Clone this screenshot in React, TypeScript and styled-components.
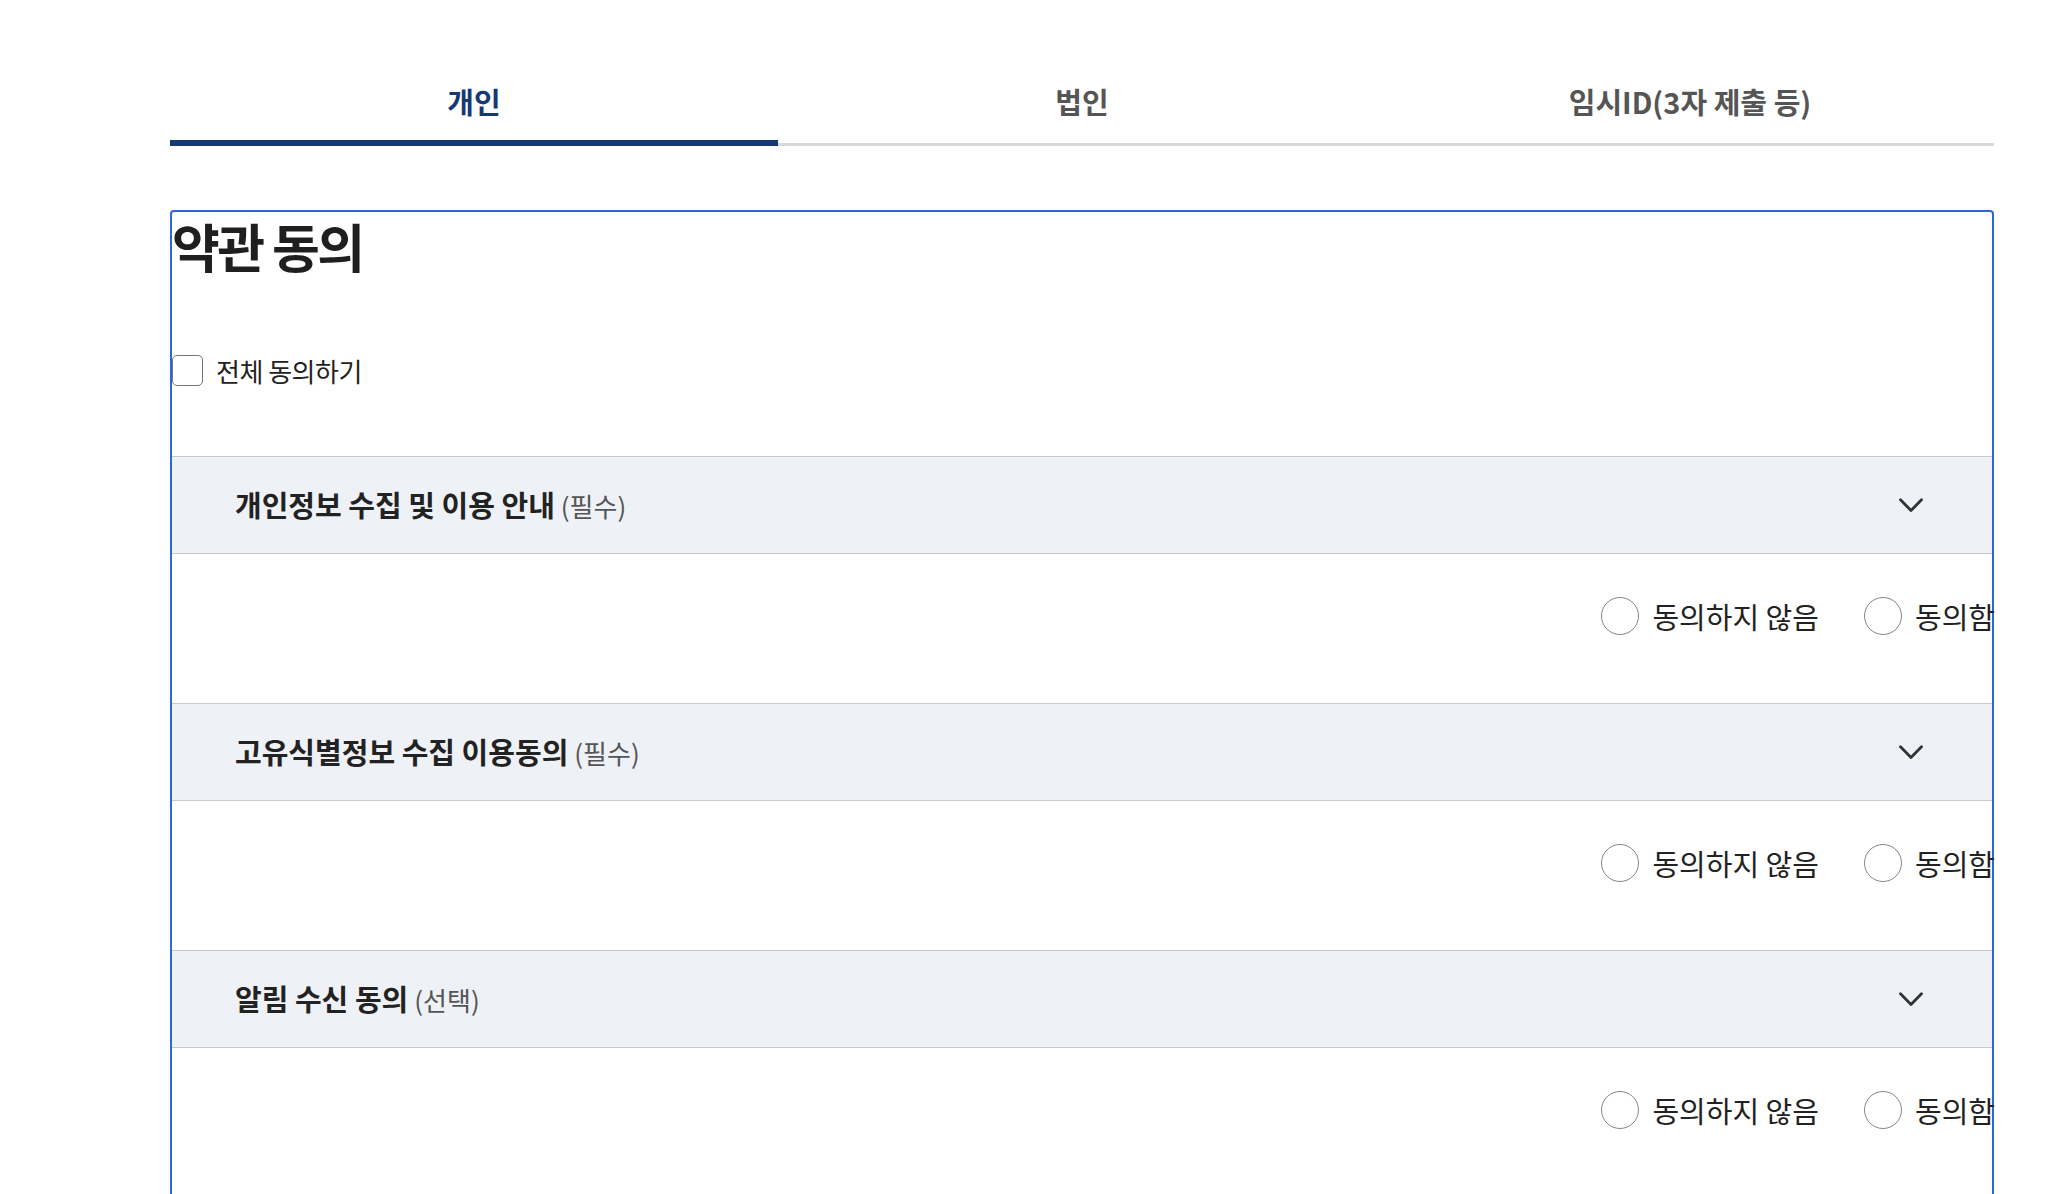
import React, { useState } from "react";
import styled, { createGlobalStyle } from "styled-components";

const GlobalStyle = createGlobalStyle`
  html, body {
    margin: 0;
    padding: 0;
    overflow: hidden;
    background: #ffffff;
  }
  body {
    font-family: "Noto Sans CJK KR", "Noto Sans", sans-serif;
    color: #222222;
  }
  * { box-sizing: border-box; }
`;

const Page = styled.div`
  width: 2056px;
  padding: 81px 62px 0 170px;
`;

const TabList = styled.div`
  display: grid;
  grid-template-columns: repeat(3, 1fr);
  align-items: end;
`;

const Tab = styled.button<{ $active?: boolean }>`
  appearance: none;
  background: none;
  border: none;
  margin: 0;
  padding: 0 0 ${(p) => (p.$active ? "19px" : "22px")};
  border-bottom: ${(p) => (p.$active ? "6px solid #163873" : "3px solid #d9d9d9")};
  font-family: inherit;
  font-size: 29px;
  font-weight: 700;
  line-height: 40px;
  letter-spacing: 0;
  color: ${(p) => (p.$active ? "#163873" : "#555555")};
  text-align: center;
  cursor: pointer;
`;

const TermsBox = styled.section`
  margin-top: 64px;
  border: 2px solid #2f66d6;
  border-radius: 4px;
  padding-bottom: 200px;
`;

const Title = styled.h2`
  margin: 5px 0 0;
  font-size: 52px;
  line-height: 58px;
  font-weight: 700;
  letter-spacing: -2.5px;
  color: #1f1f1f;
`;

const AllAgreeRow = styled.label`
  display: flex;
  align-items: center;
  gap: 13px;
  margin-top: 80px;
  height: 31px;
  font-size: 26px;
  letter-spacing: -0.5px;
  color: #222222;
  cursor: pointer;
`;

const Checkbox = styled.input`
  appearance: none;
  margin: 0;
  width: 31px;
  height: 31px;
  border: 1px solid #767676;
  border-radius: 5px;
  background: #ffffff;
  flex: none;
`;

const List = styled.div`
  margin-top: 70px;
`;

const Item = styled.div``;

const Header = styled.div`
  display: flex;
  align-items: center;
  justify-content: space-between;
  height: 98px;
  padding: 0 69px 3px 63px;
  background: #eef1f6;
  border-top: 1px solid #c8c8c8;
  border-bottom: 1px solid #c8c8c8;
`;

const HeaderTitle = styled.h3`
  margin: 0;
  font-size: 29px;
  font-weight: 700;
  letter-spacing: 0;
  color: #222222;
`;

const Tag = styled.span`
  margin-left: 6px;
  font-size: 26px;
  font-weight: 400;
  letter-spacing: 0;
  color: #555555;
`;

const ChevronButton = styled.button`
  appearance: none;
  background: none;
  border: none;
  padding: 0;
  margin-top: 4px;
  width: 24px;
  height: 15px;
  display: flex;
  cursor: pointer;
`;

const Body = styled.div`
  display: flex;
  justify-content: flex-end;
  gap: 45px;
  padding: 43px 0 68px;
  margin-right: -3px;
`;

const RadioLabel = styled.label`
  display: flex;
  align-items: center;
  gap: 13px;
  height: 38px;
  font-size: 29px;
  line-height: 38px;
  letter-spacing: 0;
  color: #222222;
  cursor: pointer;
`;

const Radio = styled.input`
  appearance: none;
  margin: 0;
  width: 38px;
  height: 38px;
  border: 1px solid #858585;
  border-radius: 50%;
  background: #ffffff;
  flex: none;
`;

const Chevron = () => (
  <svg width="24" height="15" viewBox="0 0 24 15" fill="none">
    <path d="M1.5 1.8 L12 12.6 L22.5 1.8" stroke="#333333" strokeWidth="2.8" strokeLinecap="round" strokeLinejoin="round" />
  </svg>
);

const terms = [
  { id: "privacy", title: "개인정보 수집 및 이용 안내", tag: "(필수)" },
  { id: "unique", title: "고유식별정보 수집 이용동의", tag: "(필수)" },
  { id: "notice", title: "알림 수신 동의", tag: "(선택)" },
];

const tabs = ["개인", "법인", "임시ID(3자 제출 등)"];

export default function App() {
  const [active, setActive] = useState(0);
  return (
    <>
      <GlobalStyle />
      <Page>
        <TabList>
          {tabs.map((t, i) => (
            <Tab key={t} $active={i === active} onClick={() => setActive(i)}>
              {t}
            </Tab>
          ))}
        </TabList>
        <TermsBox>
          <Title>약관 동의</Title>
          <AllAgreeRow>
            <Checkbox type="checkbox" />
            전체 동의하기
          </AllAgreeRow>
          <List>
            {terms.map((t) => (
              <Item key={t.id}>
                <Header>
                  <HeaderTitle>
                    {t.title}
                    <Tag>{t.tag}</Tag>
                  </HeaderTitle>
                  <ChevronButton aria-label="펼치기">
                    <Chevron />
                  </ChevronButton>
                </Header>
                <Body>
                  <RadioLabel>
                    <Radio type="radio" name={t.id} />
                    동의하지 않음
                  </RadioLabel>
                  <RadioLabel>
                    <Radio type="radio" name={t.id} />
                    동의함
                  </RadioLabel>
                </Body>
              </Item>
            ))}
          </List>
        </TermsBox>
      </Page>
    </>
  );
}
